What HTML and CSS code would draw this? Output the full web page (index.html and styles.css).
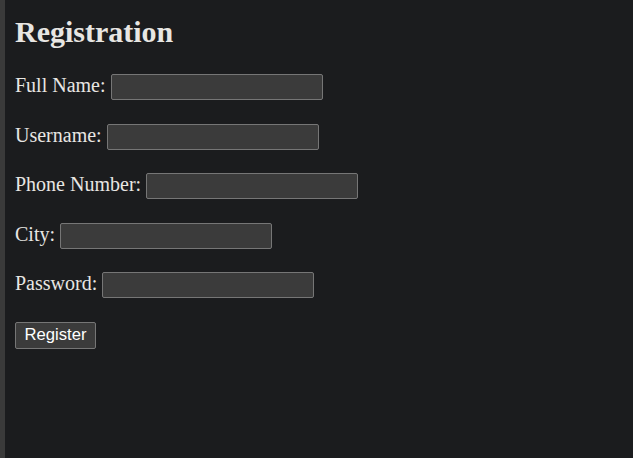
FILE: index.html
```html
<!DOCTYPE html>
<html lang="en">
<head>
<meta charset="utf-8">
<title>Registration</title>
<link rel="stylesheet" href="styles.css">
</head>
<body>
<main class="page">
  <h2 class="title">Registration</h2>
  <form class="form">
    <div class="row"><label class="label" for="fullname">Full Name:</label><input class="field" id="fullname" type="text"></div>
    <div class="row"><label class="label" for="username">Username:</label><input class="field" id="username" type="text"></div>
    <div class="row"><label class="label" for="phone">Phone Number:</label><input class="field" id="phone" type="text"></div>
    <div class="row"><label class="label" for="city">City:</label><input class="field" id="city" type="text"></div>
    <div class="row"><label class="label" for="password">Password:</label><input class="field" id="password" type="password"></div>
    <div class="row"><button class="btn" type="button">Register</button></div>
  </form>
</main>
</body>
</html>
```
FILE: styles.css
```css
html {
  background: #1b1c1e;
}
body {
  margin: 0;
  min-height: 100vh;
  box-sizing: border-box;
  border-left: 5px solid #3a3a3a;
  background: #1b1c1e;
  color: #e8e6e3;
  font-family: "Liberation Serif", "Times New Roman", serif;
  font-size: 20px;
}
.page {
  padding: 15px 10px 0;
}
.title {
  margin: 0;
  font-size: 30px;
  line-height: 34px;
  font-weight: bold;
}
.form {
  margin-top: 25px;
  display: flex;
  flex-direction: column;
  gap: 23.5px;
}
.row {
  display: flex;
  align-items: baseline;
  gap: 5px;
  height: 26px;
}
.label {
  line-height: 23px;
}
.field {
  box-sizing: border-box;
  width: 212px;
  height: 26px;
  margin: 0;
  padding: 1px 3px;
  border: 1px solid #767676;
  border-radius: 2px;
  background: #3b3b3b;
  color: #e8e6e3;
  font-family: "Liberation Sans", Arial, sans-serif;
  font-size: 16.67px;
}
.btn {
  box-sizing: border-box;
  height: 27px;
  margin: 0;
  padding: 0 8.5px;
  border: 1px solid #767676;
  border-radius: 2px;
  background: #3b3b3b;
  color: #ffffff;
  font-family: "Liberation Sans", Arial, sans-serif;
  font-size: 16.67px;
}
```
